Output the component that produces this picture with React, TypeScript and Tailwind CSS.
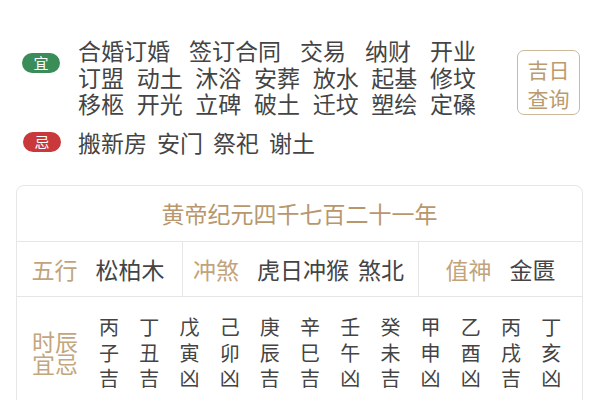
import React from "react";

const yiRows = [
  ["合婚订婚", "签订合同", "交易", "纳财", "开业"],
  ["订盟", "动土", "沐浴", "安葬", "放水", "起基", "修坟"],
  ["移柩", "开光", "立碑", "破土", "迁坟", "塑绘", "定磉"],
];

const jiItems = ["搬新房", "安门", "祭祀", "谢土"];

const hours = [
  ["丙", "子", "吉"],
  ["丁", "丑", "吉"],
  ["戊", "寅", "凶"],
  ["己", "卯", "凶"],
  ["庚", "辰", "吉"],
  ["辛", "巳", "吉"],
  ["壬", "午", "凶"],
  ["癸", "未", "吉"],
  ["甲", "申", "凶"],
  ["乙", "酉", "凶"],
  ["丙", "戌", "吉"],
  ["丁", "亥", "凶"],
];

export default function App() {
  return (
    <div className="w-[600px] h-[400px] overflow-hidden bg-white text-[#444444] font-['Noto_Sans_CJK_SC',sans-serif]">
      {/* 宜 */}
      <div className="flex items-start pt-[39px] pl-[22px] pr-[20px]">
        <div className="mt-[14px] w-[38px] h-[20px] rounded-full bg-[#3a8d58] text-white text-[15px] leading-[20px] flex items-center justify-center">
          宜
        </div>
        <div className="ml-[18px] w-[398px] text-[23px] leading-[26.5px] font-['Liberation_Sans','Noto_Sans_CJK_SC',sans-serif]">
          {yiRows.map((row, i) => (
            <div key={i} className="flex justify-between">
              {row.map((t, j) => (
                <span key={j}>{t}</span>
              ))}
            </div>
          ))}
        </div>
        <div className="ml-auto mt-[11px] w-[63px] h-[65px] pt-[4px] rounded-[7px] border border-[#cdb99c] flex flex-col items-center justify-center text-[21px] leading-[29px] text-[#bb9a6e] font-['Liberation_Sans','Noto_Sans_CJK_SC',sans-serif]">
          <span>吉日</span>
          <span>查询</span>
        </div>
      </div>

      {/* 忌 */}
      <div className="flex items-center mt-[10px] pl-[23px]">
        <div className="w-[38px] h-[20px] rounded-full bg-[#c9393b] text-white text-[15px] leading-[20px] flex items-center justify-center">
          忌
        </div>
        <div className="ml-[17px] flex gap-[10px] text-[23px] leading-[26.5px]">
          {jiItems.map((t, i) => (
            <span key={i}>{t}</span>
          ))}
        </div>
      </div>

      {/* card */}
      <div className="mt-[30px] ml-[16px] w-[567px] rounded-[8px] border border-[#e6e6e6]">
        <div className="h-[56px] border-b border-[#e6e6e6] flex items-center justify-center text-[23px] text-[#b8976d]">
          黄帝纪元四千七百二十一年
        </div>
        <div className="h-[55px] border-b border-[#e6e6e6] flex text-[23px]">
          <div className="w-[166px] border-r border-[#e6e6e6] flex items-center justify-center gap-[18px] pr-[3px]">
            <span className="text-[#c2a47c]">五行</span>
            <span>松柏木</span>
          </div>
          <div className="flex-1 border-r border-[#e6e6e6] flex items-center justify-center gap-[18px] pr-[4px]">
            <span className="text-[#c2a47c]">冲煞</span>
            <span className="flex gap-[9px]">
              <span>虎日冲猴</span>
              <span>煞北</span>
            </span>
          </div>
          <div className="w-[163px] flex items-center justify-center gap-[18px]">
            <span className="text-[#c2a47c]">值神</span>
            <span>金匮</span>
          </div>
        </div>
        <div className="flex items-center pl-[15px] pt-[19px] pb-[16px] font-['Liberation_Sans','Noto_Sans_CJK_SC',sans-serif]">
          <div className="w-[47px] text-[23px] leading-[22.5px] text-[#c4a67e]">
            时辰宜忌
          </div>
          <div className="ml-[10px] flex">
            {hours.map((col, i) => (
              <div
                key={i}
                className="w-[40.2px] flex flex-col items-center text-[20px] leading-[25.5px]"
              >
                {col.map((c, j) => (
                  <span key={j}>{c}</span>
                ))}
              </div>
            ))}
          </div>
        </div>
      </div>
    </div>
  );
}
